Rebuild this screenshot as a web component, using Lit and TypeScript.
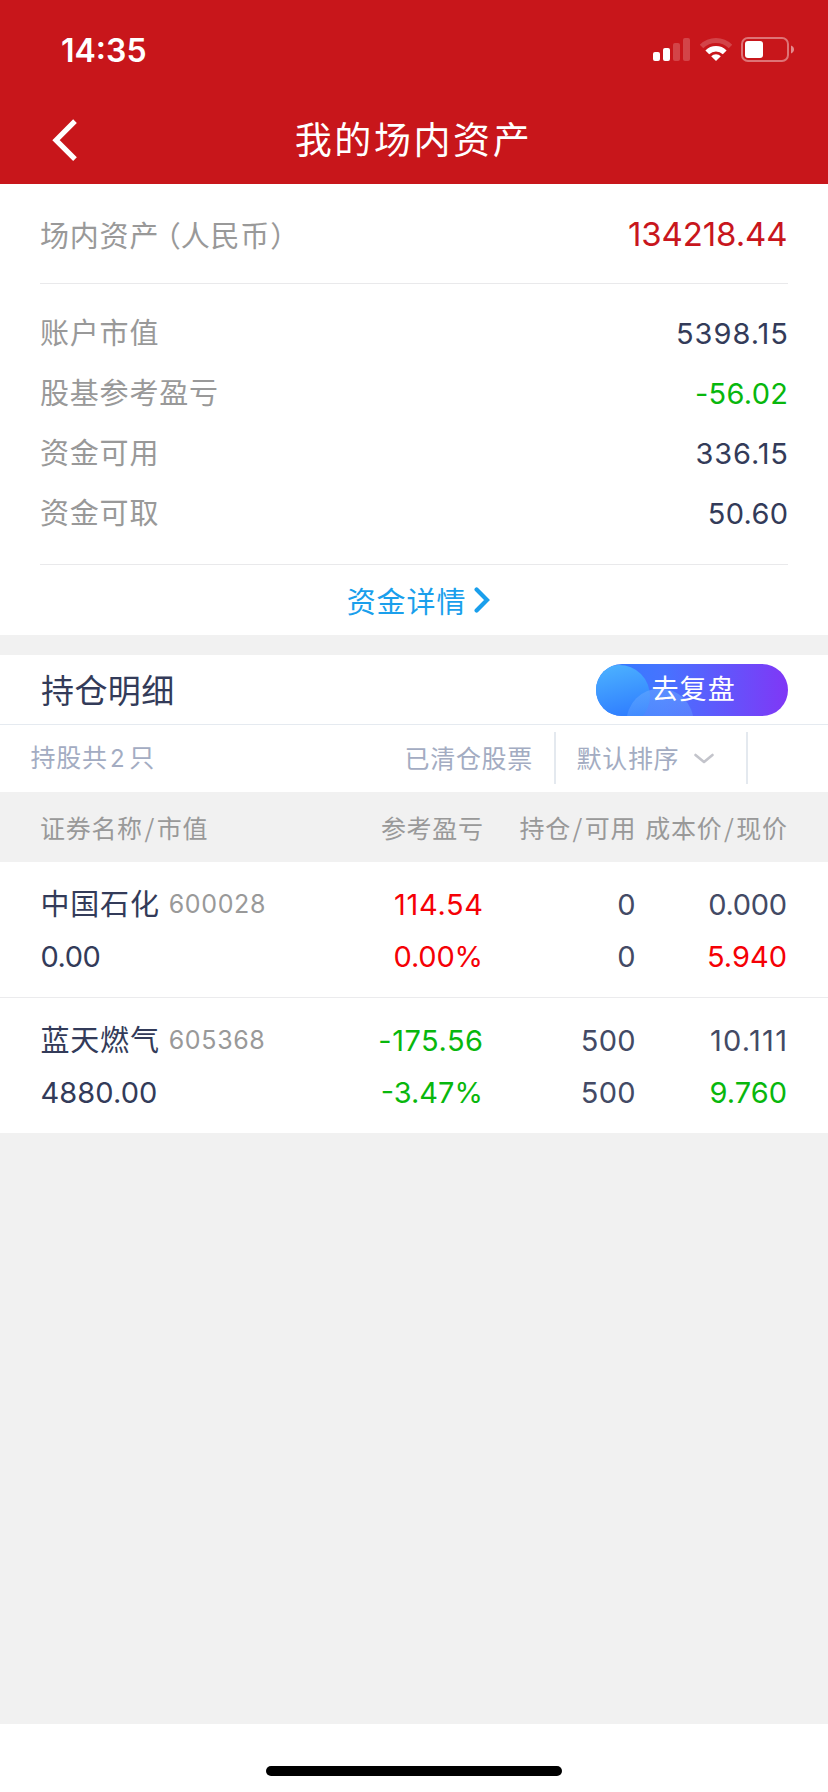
import { LitElement, html, css, svg } from "lit";
import { classMap } from "lit/directives/class-map.js";
import { styleMap } from "lit/directives/style-map.js";

type Tone = "dark" | "slate" | "up" | "down" | "brand";
interface Figure { text: string; track?: number; tone?: Tone }
interface Holding { name: string; code: string; value: Figure; columns: [Figure, Figure][] }

const summary: { label: string; figure: Figure }[] = [
  { label: "账户市值", figure: { text: "5398.15", track: 1.0 } },
  { label: "股基参考盈亏", figure: { text: "-56.02", track: 0.3, tone: "down" } },
  { label: "资金可用", figure: { text: "336.15", track: 0.9 } },
  { label: "资金可取", figure: { text: "50.60", track: 0.3 } },
];

const holdings: Holding[] = [
  {
    name: "中国石化", code: "600028", value: { text: "0.00", track: -0.5 },
    columns: [
      [{ text: "114.54", track: 0.65, tone: "up" }, { text: "0.00%", track: -0.2, tone: "up" }],
      [{ text: "0", tone: "slate" }, { text: "0", tone: "slate" }],
      [{ text: "0.000", track: -0.3, tone: "slate" }, { text: "5.940", track: 0, tone: "up" }],
    ],
  },
  {
    name: "蓝天燃气", code: "605368", value: { text: "4880.00", track: 0.08 },
    columns: [
      [{ text: "-175.56", track: 0.5, tone: "down" }, { text: "-3.47%", track: 0, tone: "down" }],
      [{ text: "500", track: 0.2, tone: "slate" }, { text: "500", track: 0.2, tone: "slate" }],
      [{ text: "10.111", track: 1.3, tone: "slate" }, { text: "9.760", track: 0, tone: "down" }],
    ],
  },
];

const figure = (f: Figure) => html`<span
  class=${classMap({ num: true, [f.tone ?? "dark"]: true })}
  style=${styleMap({ letterSpacing: `${f.track ?? 0}px`, marginRight: `${-(f.track ?? 0)}px` })}
>${f.text}</span>`;

const slash = html`<span class="slash">/</span>`;

/** Ring sector opening upwards, 45 degrees to each side of the vertical. */
const sector = (outer: number, inner: number) => {
  const o = outer * Math.SQRT1_2, i = inner * Math.SQRT1_2;
  return `M${16 - o} ${24 - o}A${outer} ${outer} 0 0 1 ${16 + o} ${24 - o}L${16 + i} ${24 - i}` +
    (inner ? `A${inner} ${inner} 0 0 0 ${16 - i} ${24 - i}Z` : "Z");
};

class AppRoot extends LitElement {
  static styles = css`
    :host {
      display: flex; flex-direction: column; height: 1792px; width: 828px; overflow: hidden;
      background: #f1f1f1; color: #333b59;
      font-family: "Noto Sans CJK SC", sans-serif; font-size: 29px;
    }
    svg { display: block; flex: none; }
    .num { font-family: Inter, "Noto Sans CJK SC", sans-serif; font-size: 29px; }
    .dark { color: #333b59; }
    .slate { color: #434a65; }
    .up { color: #f50005; }
    .down { color: #08b70d; }
    .brand { color: #c8161d; }

    .top { background: #c8161b; color: #fff; height: 184px; flex: none; }
    .status { display: flex; align-items: center; justify-content: space-between; height: 99px; padding: 0 34px 0 61px; }
    .time { font: 600 32px/99px Inter, sans-serif; padding-top: 1px; }
    .icons { display: flex; align-items: center; }
    .wifi { margin: 0 9px 0 10px; }
    .nav { display: grid; grid-template-columns: 1fr auto 1fr; height: 85px; }
    .back { margin: 18px 0 0 49.5px; }
    .title { font-size: 37px; line-height: 78px; letter-spacing: 2.6px; margin-right: 1px; }

    .assets { background: #fff; flex: none; padding: 0 40px; height: 451px; }
    .total { display: flex; justify-content: space-between; line-height: 101px; height: 99px; border-bottom: 1px solid #e9e9eb; }
    .label { color: #999; letter-spacing: 0.8px; }
    .open, .close { font-feature-settings: "halt"; }
    .open { margin-left: 7px; letter-spacing: 0; }
    .total .num { font-size: 33px; letter-spacing: -0.1px; margin-right: 0.5px; }
    .lines { height: 263px; padding-top: 17px; border-bottom: 1px solid #e9e9eb; }
    .line { display: flex; justify-content: space-between; align-items: baseline; height: 60px; line-height: 60px; }
    .more { display: flex; align-items: center; justify-content: center; gap: 8px; height: 70px; line-height: 70px; padding-left: 9px; color: #1a9fec; letter-spacing: 0.9px; }

    .heading { display: flex; align-items: center; justify-content: space-between; flex: none; height: 69px; margin-top: 20px; padding: 0 40px 0 41px; background: #fff; border-bottom: 1px solid #e5eaf0; }
    .heading-text { font-size: 33px; line-height: 68px; letter-spacing: 0.4px; margin-bottom: 1px; }
    .pill { display: grid; width: 192px; height: 52px; border-radius: 26px; overflow: hidden; margin-top: 1px; color: #fff; }
    .pill > * { grid-area: 1 / 1; }
    .pill-text { font-size: 27px; line-height: 48px; letter-spacing: 1.1px; padding-left: 55.5px; }

    .filters { display: flex; align-items: center; flex: none; height: 67px; line-height: 65px; padding: 0 80px 0 30.5px; background: #fff; color: #a3acc2; font-size: 25px; letter-spacing: 0.7px; }
    .filters > span { margin-bottom: 2px; }
    .count { flex: 1; }
    .filters .num { font-size: 24px; letter-spacing: 0; margin: 0 4.5px 0 2.5px; }
    .rule { width: 2px; height: 52px; background: #e4e9ef; margin-bottom: 1px; }
    .sold { margin-right: 21px; }
    .order { margin-left: 20.5px; margin-right: 14.7px; }
    .caret { margin-right: 32px; }

    .grid { display: grid; grid-template-columns: 319px 124px 152.5px 151.5px; padding: 0 41px 0 40px; justify-content: start; }
    .head { height: 70px; line-height: 70px; font-size: 25px; color: #999; letter-spacing: 0.7px; flex: none; }
    .head > span { white-space: nowrap; justify-self: end; margin-right: -0.7px; }
    .head > .first { justify-self: start; }
    .slash { margin: 0 1.7px; }
    .row { height: 119px; padding-top: 17px; padding-bottom: 0; background: #fff; font: 29px/52px Inter, "Noto Sans CJK SC", sans-serif; flex: none; height: 118px; }
    .row + .row { border-top: 1px solid #ebebed; }
    .cell { display: flex; flex-direction: column; align-items: flex-end; }
    .cell.first { align-items: flex-start; }
    .first .num { margin-left: 0.5px; }
    .name-line { height: 52px; white-space: nowrap; }
    .name { letter-spacing: 0.8px; margin-left: 0.5px; }
    .code { font-size: 25px; line-height: 1; color: #999; letter-spacing: 0.65px; margin-left: 9px; vertical-align: 2px; }

    .foot { background: #fff; height: 68px; margin-top: auto; flex: none; display: flex; justify-content: center; }
    .bar { width: 296px; height: 10px; border-radius: 5px; background: #000; margin-top: 42px; }
  `;

  private renderStatusIcons() {
    return html`<div class="icons">
      <svg width="37" height="25" viewBox="0 0 37 25" fill="#fff">
        ${[[0, 15], [10, 11], [20, 6], [30, 1]].map(([x, y], i) =>
          svg`<rect x=${x} y=${y} width="7" height=${24 - y} rx="2" opacity=${i < 2 ? 1 : 0.2}></rect>`)}
      </svg>
      <svg class="wifi" width="32" height="25" viewBox="0 0 32 25" fill="#fff">
        <path d=${sector(23, 18)} opacity="0.2"></path>
        <path d=${sector(15, 9.6)}></path>
        <path d=${sector(6.8, 0)}></path>
      </svg>
      <svg width="53" height="25" viewBox="0 0 53 25" fill="#fff">
        <rect x="1" y="1" width="46" height="23" rx="6" fill="none" stroke="#fff" stroke-width="2" opacity="0.4"></rect>
        <rect x="4" y="4" width="18" height="17" rx="3"></rect>
        <path d="M50 8.5C52 9.2 53 10.8 53 12.5S52 15.8 50 16.5Z" opacity="0.5"></path>
      </svg>
    </div>`;
  }

  render() {
    return html`
      <header class="top">
        <div class="status"><span class="time">14:35</span>${this.renderStatusIcons()}</div>
        <div class="nav">
          <svg class="back" width="30" height="46" viewBox="0 0 30 46"><path d="M25 4.2L6 23.2L25 42.2" fill="none" stroke="#fff" stroke-width="5.2"></path></svg>
          <span class="title">我的场内资产</span>
        </div>
      </header>

      <section class="assets">
        <div class="total">
          <span class="label">场内资产<span class="open">（</span>人民币<span class="close">）</span></span>
          <span class="num brand">134218.44</span>
        </div>
        <div class="lines">
          ${summary.map((s) => html`<div class="line"><span class="label">${s.label}</span>${figure(s.figure)}</div>`)}
        </div>
        <div class="more"><span>资金详情</span>
          <svg width="16" height="26" viewBox="0 0 16 26"><path d="M2.6 2.6L13 13L2.6 23.4" fill="none" stroke="#1a9fec" stroke-width="4.2" stroke-linecap="round"></path></svg>
        </div>
      </section>

      <div class="heading">
        <span class="heading-text">持仓明细</span>
        <div class="pill">
          <svg width="192" height="52" viewBox="0 0 192 52">
            <defs>
              <linearGradient id="base"><stop offset="0" stop-color="#2f7dff"></stop><stop offset="0.35" stop-color="#4673ff"></stop><stop offset="0.7" stop-color="#6453fb"></stop><stop offset="1" stop-color="#8037f6"></stop></linearGradient>
              <linearGradient id="big" x1="0.4" y1="0" x2="0.6" y2="0.85"><stop offset="0" stop-color="#4bb0ff"></stop><stop offset="1" stop-color="#2f7dff"></stop></linearGradient>
              <linearGradient id="small" x1="0" y1="0" x2="0" y2="0.5"><stop offset="0" stop-color="#69a8ff" stop-opacity="0.55"></stop><stop offset="1" stop-color="#69a8ff" stop-opacity="0.3"></stop></linearGradient>
            </defs>
            <rect width="192" height="52" fill="url(#base)"></rect>
            <circle cx="23" cy="32" r="31" fill="url(#big)"></circle>
            <circle cx="64" cy="58" r="33.5" fill="url(#small)"></circle>
          </svg>
          <span class="pill-text">去复盘</span>
        </div>
      </div>

      <div class="filters">
        <span class="count">持股共<span class="num">2</span>只</span>
        <span class="sold">已清仓股票</span>
        <div class="rule"></div>
        <span class="order">默认排序</span>
        <svg class="caret" width="20" height="12" viewBox="0 0 20 12"><path d="M1.5 2L10 9L18.5 2" fill="none" stroke="#c3c4cb" stroke-width="2.6" stroke-linecap="round" stroke-linejoin="round"></path></svg>
        <div class="rule"></div>
      </div>

      <div class="grid head">
        <span class="first">证券名称${slash}市值</span><span>参考盈亏</span><span>持仓${slash}可用</span><span>成本价${slash}现价</span>
      </div>
      ${holdings.map((h) => html`<div class="grid row">
        <div class="cell first">
          <div class="name-line"><span class="name">${h.name}</span><span class="code">${h.code}</span></div>
          ${figure(h.value)}
        </div>
        ${h.columns.map(([a, b]) => html`<div class="cell">${figure(a)}${figure(b)}</div>`)}
      </div>`)}

      <div class="foot"><div class="bar"></div></div>
    `;
  }
}
customElements.define("app-root", AppRoot);
